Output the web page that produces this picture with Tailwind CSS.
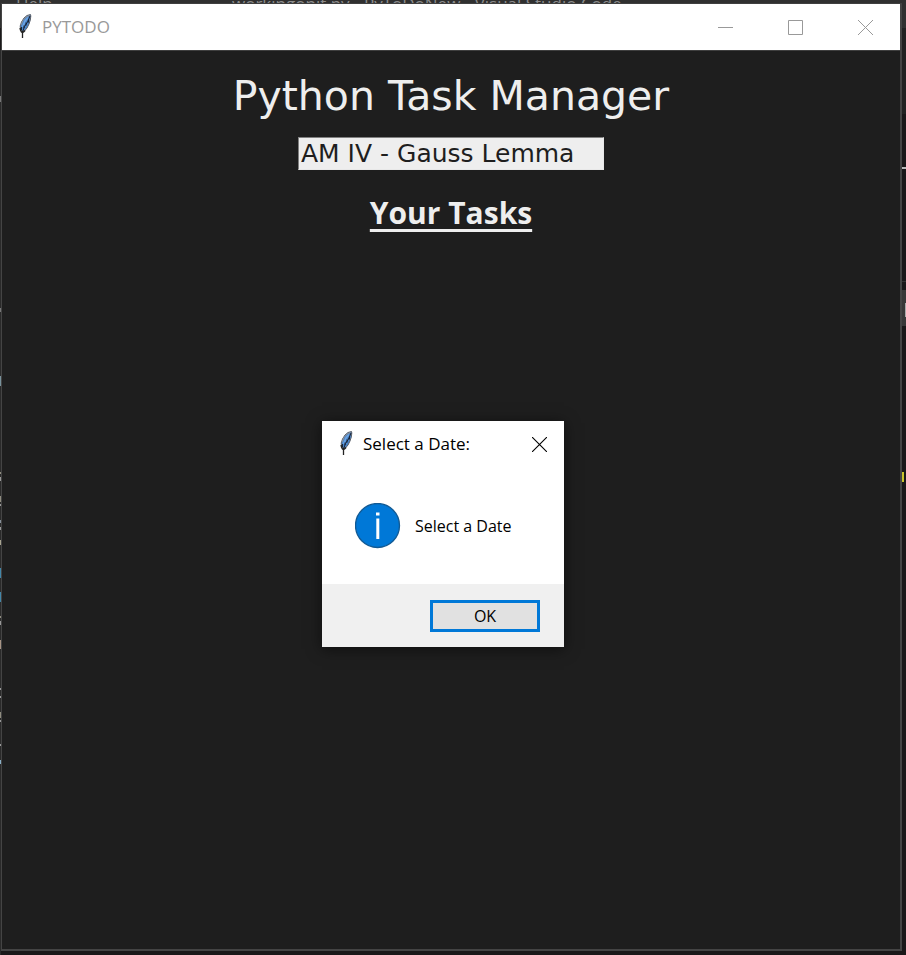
<!DOCTYPE html>
<html lang="en">
<head>
<meta charset="utf-8">
<meta name="viewport" content="width=device-width, initial-scale=1">
<title>PYTODO</title>
<script src="https://cdn.jsdelivr.net/npm/@tailwindcss/browser@4"></script>
</head>
<body class="relative flex h-screen flex-col overflow-hidden bg-[#1a1819] font-['Open_Sans',sans-serif]">

<svg class="hidden" aria-hidden="true">
  <symbol id="feather" viewBox="0 0 16 26">
    <path d="M5 18 3.500 16 3.200 13 4.500 9 7 5 10 2.500 13.500 1.500 13.800 3 13.300 7 12 11 10 15 7.500 18Z" fill="#4a84c8" stroke="#5c6068" stroke-width="1"/>
    <path d="M4 12 6 7.500 9 4 12.500 2.500" fill="none" stroke="#8f9297" stroke-width="1"/>
    <path d="M5.500 14 8 8 11 4.500" fill="none" stroke="#6da6e6" stroke-width="1.600"/>
    <path d="M13 3 10.500 9 7.500 13.500 5.500 19" fill="none" stroke="#18202e" stroke-width="1"/>
    <path d="M9 9.500V12.500M11.500 6.500V9.500M4.500 14V17M7 12.500V15" stroke="#1a2536" stroke-width="1"/>
    <path d="M3 15 3.500 17 4.500 19H6.500L8 17.500" fill="none" stroke="#222" stroke-width="1.400"/>
    <path d="M5.500 18V25" stroke="#222" stroke-width="1.300"/>
  </symbol>
</svg>

<!-- Editor behind the app window -->
<div class="absolute inset-0 overflow-hidden text-[17px] leading-6 text-[#8c8c8c]" aria-hidden="true">
  <div class="relative h-7 bg-[#303030]">
    <span class="absolute -top-2 left-4">Help</span>
    <span class="absolute -top-2 left-[232px] whitespace-nowrap">workingonit.py - PyToDoNew - Visual Studio Code</span>
  </div>
  <div class="absolute top-7 right-0 h-[86px] w-1 bg-[#222]"></div>
  <div class="absolute top-[281px] right-0 h-px w-1 bg-[#333]"></div>
  <div class="absolute top-[290px] right-0 h-9 w-1 bg-[#383838]"></div>
  <div class="absolute top-[303px] right-0 h-[14px] w-px bg-[#aaa]"></div>
  <div class="absolute top-[167px] right-0 h-[2px] w-1 bg-[#bbb]"></div>
  <div class="absolute top-[472px] right-[2px] h-[10px] w-[2px] bg-[#c9c32b]"></div>
  <div class="absolute inset-y-0 top-[50px] left-0 w-px bg-[#2a2a2a]"></div>
  <div class="absolute top-[96px] left-0 h-1.5 w-px bg-[#777]"></div>
  <div class="absolute top-[308px] left-0 h-1 w-px bg-[#777]"></div>
  <div class="absolute top-[376px] left-0 h-[10px] w-px bg-[#78929c]"></div>
  <div class="absolute top-[472px] left-0 h-[2px] w-px bg-[#908d80]"></div>
  <div class="absolute top-[477px] left-0 h-1 w-px bg-[#999]"></div>
  <div class="absolute top-[496px] left-0 h-1.5 w-px bg-[#908d80]"></div>
  <div class="absolute top-[504px] left-0 h-[2px] w-px bg-[#999]"></div>
  <div class="absolute top-[520px] left-0 h-[3px] w-px bg-[#87909a]"></div>
  <div class="absolute top-[527px] left-0 h-[3px] w-px bg-[#999]"></div>
  <div class="absolute top-[540px] left-0 h-[5px] w-px bg-[#a8a490]"></div>
  <div class="absolute top-[568px] left-0 h-[10px] w-px bg-[#4286a8]"></div>
  <div class="absolute top-[592px] left-0 h-[10px] w-px bg-[#4286a8]"></div>
  <div class="absolute top-[616px] left-0 h-[2px] w-px bg-[#908d80]"></div>
  <div class="absolute top-[621px] left-0 h-1 w-px bg-[#999]"></div>
  <div class="absolute top-[640px] left-0 h-[9px] w-px bg-[#a79485]"></div>
  <div class="absolute top-[688px] left-0 h-[2px] w-px bg-[#999]"></div>
  <div class="absolute top-[696px] left-0 h-[2px] w-px bg-[#999]"></div>
  <div class="absolute top-[712px] left-0 h-1.5 w-px bg-[#908d80]"></div>
  <div class="absolute top-[720px] left-0 h-[2px] w-px bg-[#999]"></div>
  <div class="absolute top-[744px] left-0 h-[2px] w-px bg-[#999]"></div>
  <div class="absolute top-[760px] left-0 h-1 w-px bg-[#8ab0c8]"></div>
</div>

<!-- App window -->
<div class="relative mt-[3px] mr-1 mb-1 ml-px flex flex-1 flex-col border border-r-2 border-b-2 border-[#444] bg-[#1e1e1e] border-t-[#3f3f3f]">
  <header class="flex h-[46px] shrink-0 items-center bg-white pl-[15px]">
    <svg class="-mt-[2px] h-[26px] w-4" aria-hidden="true"><use href="#feather"/></svg>
    <span class="ml-[9px] flex-1 text-[17px] leading-6 text-[#999]">PYTODO</span>
    <button type="button" aria-label="Minimize" class="flex h-full w-[70px] items-center justify-center">
      <svg class="h-[15px] w-[15px]" viewBox="0 0 15 15"><path d="M0 7.500H15" stroke="#999"/></svg>
    </button>
    <button type="button" aria-label="Maximize" class="flex h-full w-[70px] items-center justify-center">
      <svg class="h-[15px] w-[15px]" viewBox="0 0 15 15"><path d="M.5.5H14.500V14.500H.5Z" fill="none" stroke="#999"/></svg>
    </button>
    <button type="button" aria-label="Close" class="flex h-full w-[70px] items-center justify-center">
      <svg class="h-[15px] w-[15px]" viewBox="0 0 15 15"><path d="M0 0 15 15M15 0 0 15" stroke="#999"/></svg>
    </button>
  </header>
  <main class="flex flex-1 flex-col items-center border-t border-[#3f3f3f] font-['DejaVu_Sans',sans-serif] text-[#eee]">
    <h1 class="mt-5 text-[41px] leading-[50px] whitespace-nowrap">Python Task Manager</h1>
    <input type="text" aria-label="New task" value="AM IV - Gauss Lemma" class="mt-4 h-[33px] w-[306px] border border-[#e8e8e8] border-t-[#808080] border-l-[#808080] bg-[#eee] px-[2px] text-[25px] leading-[30px] text-[#1e1e1e] outline-none">
    <h2 class="mt-6 font-['Open_Sans',sans-serif] text-[30px] leading-[38px] font-bold underline decoration-[3px] underline-offset-[5px]">Your Tasks</h2>
  </main>
</div>

<!-- Message box -->
<div role="dialog" aria-labelledby="dialog-title" class="absolute top-[421px] left-[322px] flex w-[242px] flex-col bg-white text-black shadow-[0_2px_14px_rgba(0,0,0,0.55)]">
  <div class="flex h-[46px] items-center pr-[17px] pl-4">
    <svg class="-mt-[2px] h-[26px] w-4" aria-hidden="true"><use href="#feather"/></svg>
    <span id="dialog-title" class="ml-[9px] flex-1 text-[17px] leading-6">Select a Date:</span>
    <button type="button" aria-label="Close dialog">
      <svg class="block h-[15px] w-[15px]" viewBox="0 0 15 15"><path d="M0 0 15 15M15 0 0 15" stroke="#000" stroke-width="1.100"/></svg>
    </button>
  </div>
  <div class="flex h-[117px] items-center pl-[33px]">
    <svg class="h-[46px] w-[46px]" viewBox="0 0 46 46" aria-hidden="true">
      <circle cx="22.500" cy="22.500" r="22" fill="#0078d7" stroke="#125a94" stroke-width="1.300"/>
      <path d="M21 9.500H24.500V12.500H21Z" fill="#fff"/>
      <path d="M22.800 15.500V36" stroke="#fff" stroke-width="3"/>
    </svg>
    <p class="ml-[14px] text-base leading-6">Select a Date</p>
  </div>
  <div class="flex h-[63px] items-center justify-end bg-[#f0f0f0] pr-6">
    <button type="button" class="h-8 w-[110px] border-[3px] border-[#0078d7] bg-[#e1e1e1] text-base leading-6">OK</button>
  </div>
</div>
</body>
</html>
